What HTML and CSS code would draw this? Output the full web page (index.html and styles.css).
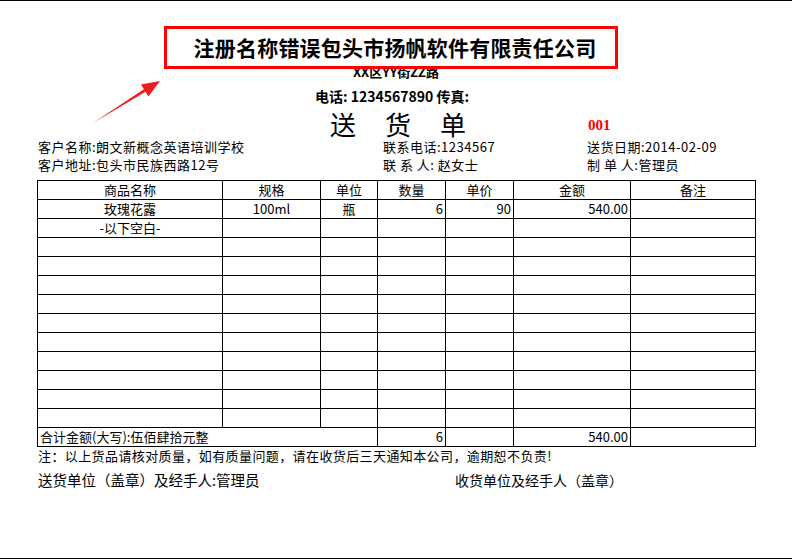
FILE: index.html
```html
<!DOCTYPE html>
<html lang="zh-CN">
<head>
<meta charset="utf-8">
<title>送货单</title>
<link rel="stylesheet" href="styles.css">
</head>
<body>
<div class="page">
  <div class="brand-wrap">
    <div class="brand-box">注册名称错误包头市扬帆软件有限责任公司</div>
  </div>
  <div class="addr">XX区YY街ZZ路</div>
  <div class="phone">电话: 1234567890 传真:</div>
  <div class="title-row">
    <div></div>
    <div class="title">送货单</div>
    <div class="serial">001</div>
  </div>
  <div class="info">
    <div>客户名称:朗文新概念英语培训学校</div>
    <div>联系电话:1234567</div>
    <div>送货日期:2014-02-09</div>
    <div>客户地址:包头市民族西路12号</div>
    <div>联 系 人: 赵女士</div>
    <div>制 单 人:管理员</div>
  </div>
  <div class="grid">
    <div class="c">商品名称</div><div class="c">规格</div><div class="c">单位</div><div class="c">数量</div><div class="c">单价</div><div class="c">金额</div><div class="c">备注</div>
    <div class="c">玫瑰花露</div><div class="c">100ml</div><div class="c">瓶</div><div class="r">6</div><div class="r">90</div><div class="r">540.00</div><div></div>
    <div class="c">-以下空白-</div><div></div><div></div><div></div><div></div><div></div><div></div>
    <div></div><div></div><div></div><div></div><div></div><div></div><div></div>
    <div></div><div></div><div></div><div></div><div></div><div></div><div></div>
    <div></div><div></div><div></div><div></div><div></div><div></div><div></div>
    <div></div><div></div><div></div><div></div><div></div><div></div><div></div>
    <div></div><div></div><div></div><div></div><div></div><div></div><div></div>
    <div></div><div></div><div></div><div></div><div></div><div></div><div></div>
    <div></div><div></div><div></div><div></div><div></div><div></div><div></div>
    <div></div><div></div><div></div><div></div><div></div><div></div><div></div>
    <div></div><div></div><div></div><div></div><div></div><div></div><div></div>
    <div></div><div></div><div></div><div></div><div></div><div></div><div></div>
    <div class="l span3">合计金额(大写):伍佰肆拾元整</div><div class="r">6</div><div></div><div class="r">540.00</div><div></div>
  </div>
  <div class="note">注：以上货品请核对质量，如有质量问题，请在收货后三天通知本公司，逾期恕不负责!</div>
  <div class="sign">
    <div>送货单位（盖章）及经手人:管理员</div>
    <div class="sign-right">收货单位及经手人（盖章）</div>
  </div>
  <svg class="arrow" width="792" height="140" viewBox="0 0 792 140">
    <polygon points="93,122 143.9,88.2 141,83.6 160,80 148.4,95.4 145.5,90.8" fill="#ee1c1c"/>
  </svg>
</div>
</body>
</html>
```
FILE: styles.css
```css
html, body {
  margin: 0;
  padding: 0;
  background: #fff;
}
body {
  font-family: "Noto Sans CJK SC", "Noto Sans", sans-serif;
  font-size: 13px;
  color: #000;
}
.page {
  position: relative;
  width: 792px;
  height: 559px;
  box-sizing: border-box;
  border-top: 1px solid #000;
  border-bottom: 1px solid #000;
  overflow: hidden;
}
.brand-wrap {
  padding-top: 25px;
  padding-left: 164px;
}
.brand-box {
  position: relative;
  z-index: 1;
  width: 448px;
  height: 37px;
  border: 3px solid #ff0000;
  box-sizing: content-box;
  font-size: 21px;
  font-weight: bold;
  line-height: 37px;
  text-align: center;
  letter-spacing: 0.2px;
  text-indent: 8px;
}
.addr {
  margin-top: -4px;
  font-size: 13px;
  font-weight: bold;
  line-height: 14px;
  text-align: center;
}
.phone {
  margin-top: 10px;
  font-size: 14px;
  font-weight: bold;
  line-height: 14px;
  text-align: center;
  padding-right: 8px;
}
.title-row {
  display: grid;
  grid-template-columns: 330px auto 1fr;
  align-items: center;
  margin-top: 8px;
  height: 26px;
}
.title {
  font-size: 26px;
  line-height: 26px;
  letter-spacing: 29px;
  margin-right: -29px;
  font-weight: normal;
}
.serial {
  padding-left: 122px;
  color: #ff0000;
  font-family: "Liberation Serif", serif;
  font-weight: bold;
  font-size: 15px;
  line-height: 18px;
  padding-top: 2px;
}
.info {
  display: grid;
  grid-template-columns: 345px 204px 1fr;
  padding-left: 38px;
  margin-top: 1px;
  line-height: 18px;
  letter-spacing: 0.5px;
}
.grid {
  margin: 6px 0 0 37px;
  display: grid;
  grid-template-columns: 184px 97px 56px 67px 67px 116px 124px;
  grid-auto-rows: 18px;
  gap: 1px;
  padding: 1px;
  background: #000;
  width: max-content;
}
.grid > div {
  background: #fff;
  line-height: 18px;
  white-space: nowrap;
  overflow: hidden;
}
.grid .c { text-align: center; }
.grid .r { text-align: right; padding-right: 2px; }
.grid .l { text-align: left; padding-left: 2px; }
.grid .span3 { grid-column: span 3; }
.note {
  padding-left: 38px;
  line-height: 18px;
  letter-spacing: 0.4px;
}
.sign {
  display: grid;
  grid-template-columns: 417px auto;
  padding-left: 38px;
  margin-top: 5px;
  font-size: 14.5px;
  line-height: 20px;
}
.sign-right {
  font-size: 14px;
}
.arrow {
  position: absolute;
  left: 0;
  top: 0;
}
```
